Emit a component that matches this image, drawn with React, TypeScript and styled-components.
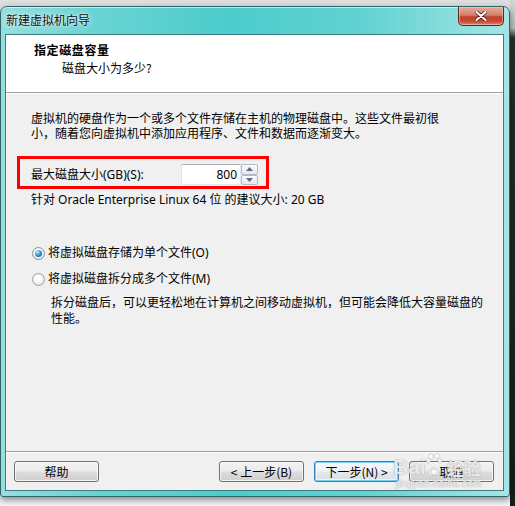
import React from "react";
import styled, { createGlobalStyle, css } from "styled-components";

const Global = createGlobalStyle`
  html, body { margin: 0; padding: 0; }
  body {
    width: 515px; height: 506px; overflow: hidden;
    background: linear-gradient(#dedede, #f2f2f2 40%, #f6f6f6);
    font-family: "Noto Sans", "Noto Sans CJK SC", sans-serif;
    font-size: 12px; color: #000;
  }
`;

const Page = styled.div`
  display: flex;
  align-items: flex-start;
  height: 506px;
`;

const Edge = styled.div`
  flex: 1;
  align-self: stretch;
  background: linear-gradient(#d4d4d4 0px, #bdbdbd 28px, #2c2c2c 38px, #1b1b1b 100%);
`;

const Window = styled.div`
  position: relative;
  margin-top: 6px;
  width: 510px;
  height: 491px;
  box-sizing: border-box;
  display: flex;
  flex-direction: column;
  padding: 0 5px 5px 4px;
  border: 1px solid #2f6464;
  border-radius: 7px 7px 3px 3px;
  background: linear-gradient(90deg, #96dede 0%, #6ad3d3 18%, #4ccccc 45%, #62d2d2 72%, #a4e5e5 100%);
  box-shadow: 0 3px 7px rgba(0, 0, 0, 0.45), inset 0 1px 0 rgba(255, 255, 255, 0.6);
`;

const TitleBar = styled.div`
  height: 27px;
  display: flex;
  align-items: flex-start;
  justify-content: space-between;
`;

const Title = styled.div`
  margin-top: 5px;
  padding-left: 1px;
  line-height: 16px;
  font-size: 12px;
  font-family: "Noto Sans CJK SC", sans-serif;
  color: #111;
  text-shadow: 0 0 6px rgba(255, 255, 255, 0.9), 0 0 2px rgba(255, 255, 255, 0.8);
`;

const CloseBtn = styled.div`
  width: 46px;
  height: 19px;
  box-sizing: border-box;
  border: 1px solid #5a2620;
  border-top: none;
  border-radius: 0 0 5px 5px;
  background: linear-gradient(#e7ab9b 0%, #d8806b 45%, #c0422c 55%, #c94a32 80%, #dc8a74 100%);
  box-shadow: inset 0 0 0 1px rgba(255, 220, 210, 0.45);
  display: flex;
  align-items: center;
  justify-content: center;
`;

const Client = styled.div`
  flex: 1;
  display: flex;
  flex-direction: column;
  border: 1px solid #3f7c80;
  background: #f0f0f0;
`;

const Header = styled.div`
  height: 58px;
  box-sizing: border-box;
  background: #fff;
  border-bottom: 1px solid #a0a0a0;
  padding: 7px 0 0 28px;
  line-height: 16px;
`;

const HeaderTitle = styled.div`
  font-weight: bold;
  font-family: "Noto Sans CJK SC", sans-serif;
  font-size: 12px;
  letter-spacing: 0.6px;
`;

const HeaderSub = styled.div`
  margin-top: 2px;
  padding-left: 28px;
  font-family: "Noto Sans CJK SC", sans-serif;
`;

const Body = styled.div`
  flex: 1;
  border-top: 1px solid #fff;
  padding: 17px 0 0 25px;
  display: flex;
  flex-direction: column;
  align-items: flex-start;
`;

const Line = styled.div<{ $top?: number; $indent?: number; $lh?: number }>`
  line-height: ${(p) => p.$lh ?? 15}px;
  white-space: nowrap;
  margin-top: ${(p) => p.$top ?? 0}px;
  padding-left: ${(p) => p.$indent ?? 0}px;
`;

const RedBox = styled.div`
  margin: 15px 0 0 -14px;
  width: 252px;
  height: 33px;
  box-sizing: border-box;
  border: 3px solid #ff0000;
  padding: 5px 0 1px 11px;
  display: flex;
  align-items: center;
`;

const FieldLabel = styled.div`
  width: 150px;
  line-height: 15px;
`;

const NumInput = styled.div`
  width: 60px;
  height: 21px;
  box-sizing: border-box;
  border: 1px solid #e3e9ef;
  border-top-color: #abadb3;
  border-left-color: #e2e3ea;
  background: #fff;
  text-align: right;
  padding-right: 3px;
  line-height: 19px;
  font-size: 12px;
`;

const Spinner = styled.div`
  width: 17px;
  height: 21px;
  display: flex;
  flex-direction: column;
`;

const SpinBtn = styled.div`
  flex: 1;
  box-sizing: border-box;
  border: 1px solid #b5b9c0;
  border-radius: 2px;
  background: linear-gradient(#fbfbfb, #e6e8ec);
  display: flex;
  align-items: center;
  justify-content: center;
`;

const RadioRow = styled.div<{ $top: number }>`
  margin-top: ${(p) => p.$top}px;
  display: flex;
  align-items: center;
  gap: 3px;
  line-height: 16px;
  padding-left: 1px;
`;

const RadioDot = styled.span<{ $on?: boolean }>`
  width: 13px;
  height: 13px;
  box-sizing: border-box;
  border-radius: 50%;
  border: 1px solid #a2a2a2;
  background: radial-gradient(circle at 45% 40%, #ffffff 20%, #e6e6e6 75%, #d4d4d4);
  display: flex;
  align-items: center;
  justify-content: center;
  ${(p) =>
    p.$on &&
    css`
      border-color: #8c8f94;
      &::after {
        content: "";
        width: 7px;
        height: 7px;
        border-radius: 50%;
        background: radial-gradient(circle at 35% 30%, #c6ecff 0%, #3a9ad6 45%, #0f4f8f 100%);
      }
    `}
`;

const Footer = styled.div`
  border-top: 1px solid #a0a0a0;
  box-shadow: inset 0 1px 0 #fff;
  padding: 9px 9px 8px 8px;
  display: flex;
  justify-content: space-between;
`;

const ButtonGroup = styled.div`
  display: flex;
  gap: 10px;
`;

const Button = styled.div<{ $default?: boolean }>`
  width: 85px;
  height: 21px;
  box-sizing: border-box;
  border: 1px solid #707070;
  border-radius: 3px;
  background: linear-gradient(#f2f2f2 0%, #ebebeb 48%, #dddddd 52%, #cfcfcf 100%);
  box-shadow: inset 0 0 0 1px rgba(255, 255, 255, 0.75);
  display: flex;
  align-items: center;
  justify-content: center;
  line-height: 19px;
  font-size: 12px;
  font-family: "Noto Sans CJK SC", sans-serif;
  ${(p) =>
    p.$default &&
    css`
      border-color: #3c7fb1;
      background: linear-gradient(#f6f9fb 0%, #eef2f5 48%, #e2e8ec 52%, #d8e0e6 100%);
      box-shadow: inset 0 0 0 1px #6fd3f7, inset 0 0 0 2px rgba(255, 255, 255, 0.6);
    `}
`;

const Watermark = styled.div`
  position: absolute;
  left: 392px;
  top: 446px;
  pointer-events: none;
  color: rgba(255, 255, 255, 0.8);
  text-shadow: 0 0 1px rgba(120, 120, 120, 0.6), 0 0 2px rgba(150, 150, 150, 0.4);
  display: flex;
  flex-direction: column;
  align-items: flex-start;
`;

const MarkTop = styled.div`
  display: flex;
  align-items: flex-end;
  font-family: "Liberation Sans", sans-serif;
  font-size: 21px;
  font-weight: bold;
  line-height: 22px;
`;

const MarkCJK = styled.span`
  font-family: "Noto Sans CJK SC", sans-serif;
  font-size: 17px;
  font-weight: bold;
  line-height: 20px;
  margin-left: 1px;
`;

const MarkSmall = styled.div`
  font-family: "Liberation Sans", sans-serif;
  font-size: 10px;
  line-height: 12px;
  margin-left: 3px;
  letter-spacing: 0.3px;
`;

const Paw = () => (
  <svg width="20" height="24" viewBox="0 0 20 24" style={{ marginBottom: 1 }}>
    <g fill="rgba(255,255,255,0.8)" stroke="rgba(140,140,140,0.55)" strokeWidth="0.6">
      <ellipse cx="5" cy="3.5" rx="2.2" ry="2.8" />
      <ellipse cx="11" cy="3" rx="2.2" ry="2.8" />
      <ellipse cx="2.5" cy="8" rx="2" ry="2.4" />
      <ellipse cx="14" cy="8" rx="2" ry="2.4" />
      <path d="M3 21 C3 13 13 13 13 21 C11 23 5 23 3 21 Z" />
      <circle cx="8" cy="19" r="3" fill="none" />
    </g>
  </svg>
);

const Arrow = ({ up }: { up?: boolean }) => (
  <svg width="7" height="4" viewBox="0 0 7 4">
    <path d={up ? "M0 4 L3.5 0 L7 4 Z" : "M0 0 L3.5 4 L7 0 Z"} fill="#5b6b8c" />
  </svg>
);

export default function App() {
  return (
    <>
      <Global />
      <Page>
        <Window>
          <TitleBar>
            <Title>新建虚拟机向导</Title>
            <CloseBtn>
              <svg width="12" height="10" viewBox="0 0 12 10">
                <path
                  d="M1.5 1 L10.5 9 M10.5 1 L1.5 9"
                  stroke="#3a1a16"
                  strokeWidth="3.6"
                  strokeLinecap="round"
                />
                <path
                  d="M1.5 1 L10.5 9 M10.5 1 L1.5 9"
                  stroke="#ffffff"
                  strokeWidth="2.2"
                  strokeLinecap="round"
                />
              </svg>
            </CloseBtn>
          </TitleBar>
          <Client>
            <Header>
              <HeaderTitle>指定磁盘容量</HeaderTitle>
              <HeaderSub>磁盘大小为多少?</HeaderSub>
            </Header>
            <Body>
              <Line>虚拟机的硬盘作为一个或多个文件存储在主机的物理磁盘中。这些文件最初很</Line>
              <Line>小，随着您向虚拟机中添加应用程序、文件和数据而逐渐变大。</Line>
              <RedBox>
                <FieldLabel>最大磁盘大小(GB)(S):</FieldLabel>
                <NumInput>800</NumInput>
                <Spinner>
                  <SpinBtn>
                    <Arrow up />
                  </SpinBtn>
                  <SpinBtn>
                    <Arrow />
                  </SpinBtn>
                </Spinner>
              </RedBox>
              <Line $top={3}>针对 Oracle Enterprise Linux 64 位 的建议大小: 20 GB</Line>
              <RadioRow $top={38}>
                <RadioDot $on />
                将虚拟磁盘存储为单个文件(O)
              </RadioRow>
              <RadioRow $top={10}>
                <RadioDot />
                将虚拟磁盘拆分成多个文件(M)
              </RadioRow>
              <Line $top={8} $indent={20} $lh={16}>
                拆分磁盘后，可以更轻松地在计算机之间移动虚拟机，但可能会降低大容量磁盘的
              </Line>
              <Line $indent={20} $lh={16}>
                性能。
              </Line>
            </Body>
            <Footer>
              <Button>帮助</Button>
              <ButtonGroup>
                <Button>&lt; 上一步(B)</Button>
                <Button $default>下一步(N) &gt;</Button>
                <Button>取消</Button>
              </ButtonGroup>
            </Footer>
          </Client>
          <Watermark>
            <MarkTop>
              Bai
              <Paw />
              <MarkCJK>经验</MarkCJK>
            </MarkTop>
            <MarkSmall>jingyan.baidu.com</MarkSmall>
          </Watermark>
        </Window>
        <Edge />
      </Page>
    </>
  );
}
